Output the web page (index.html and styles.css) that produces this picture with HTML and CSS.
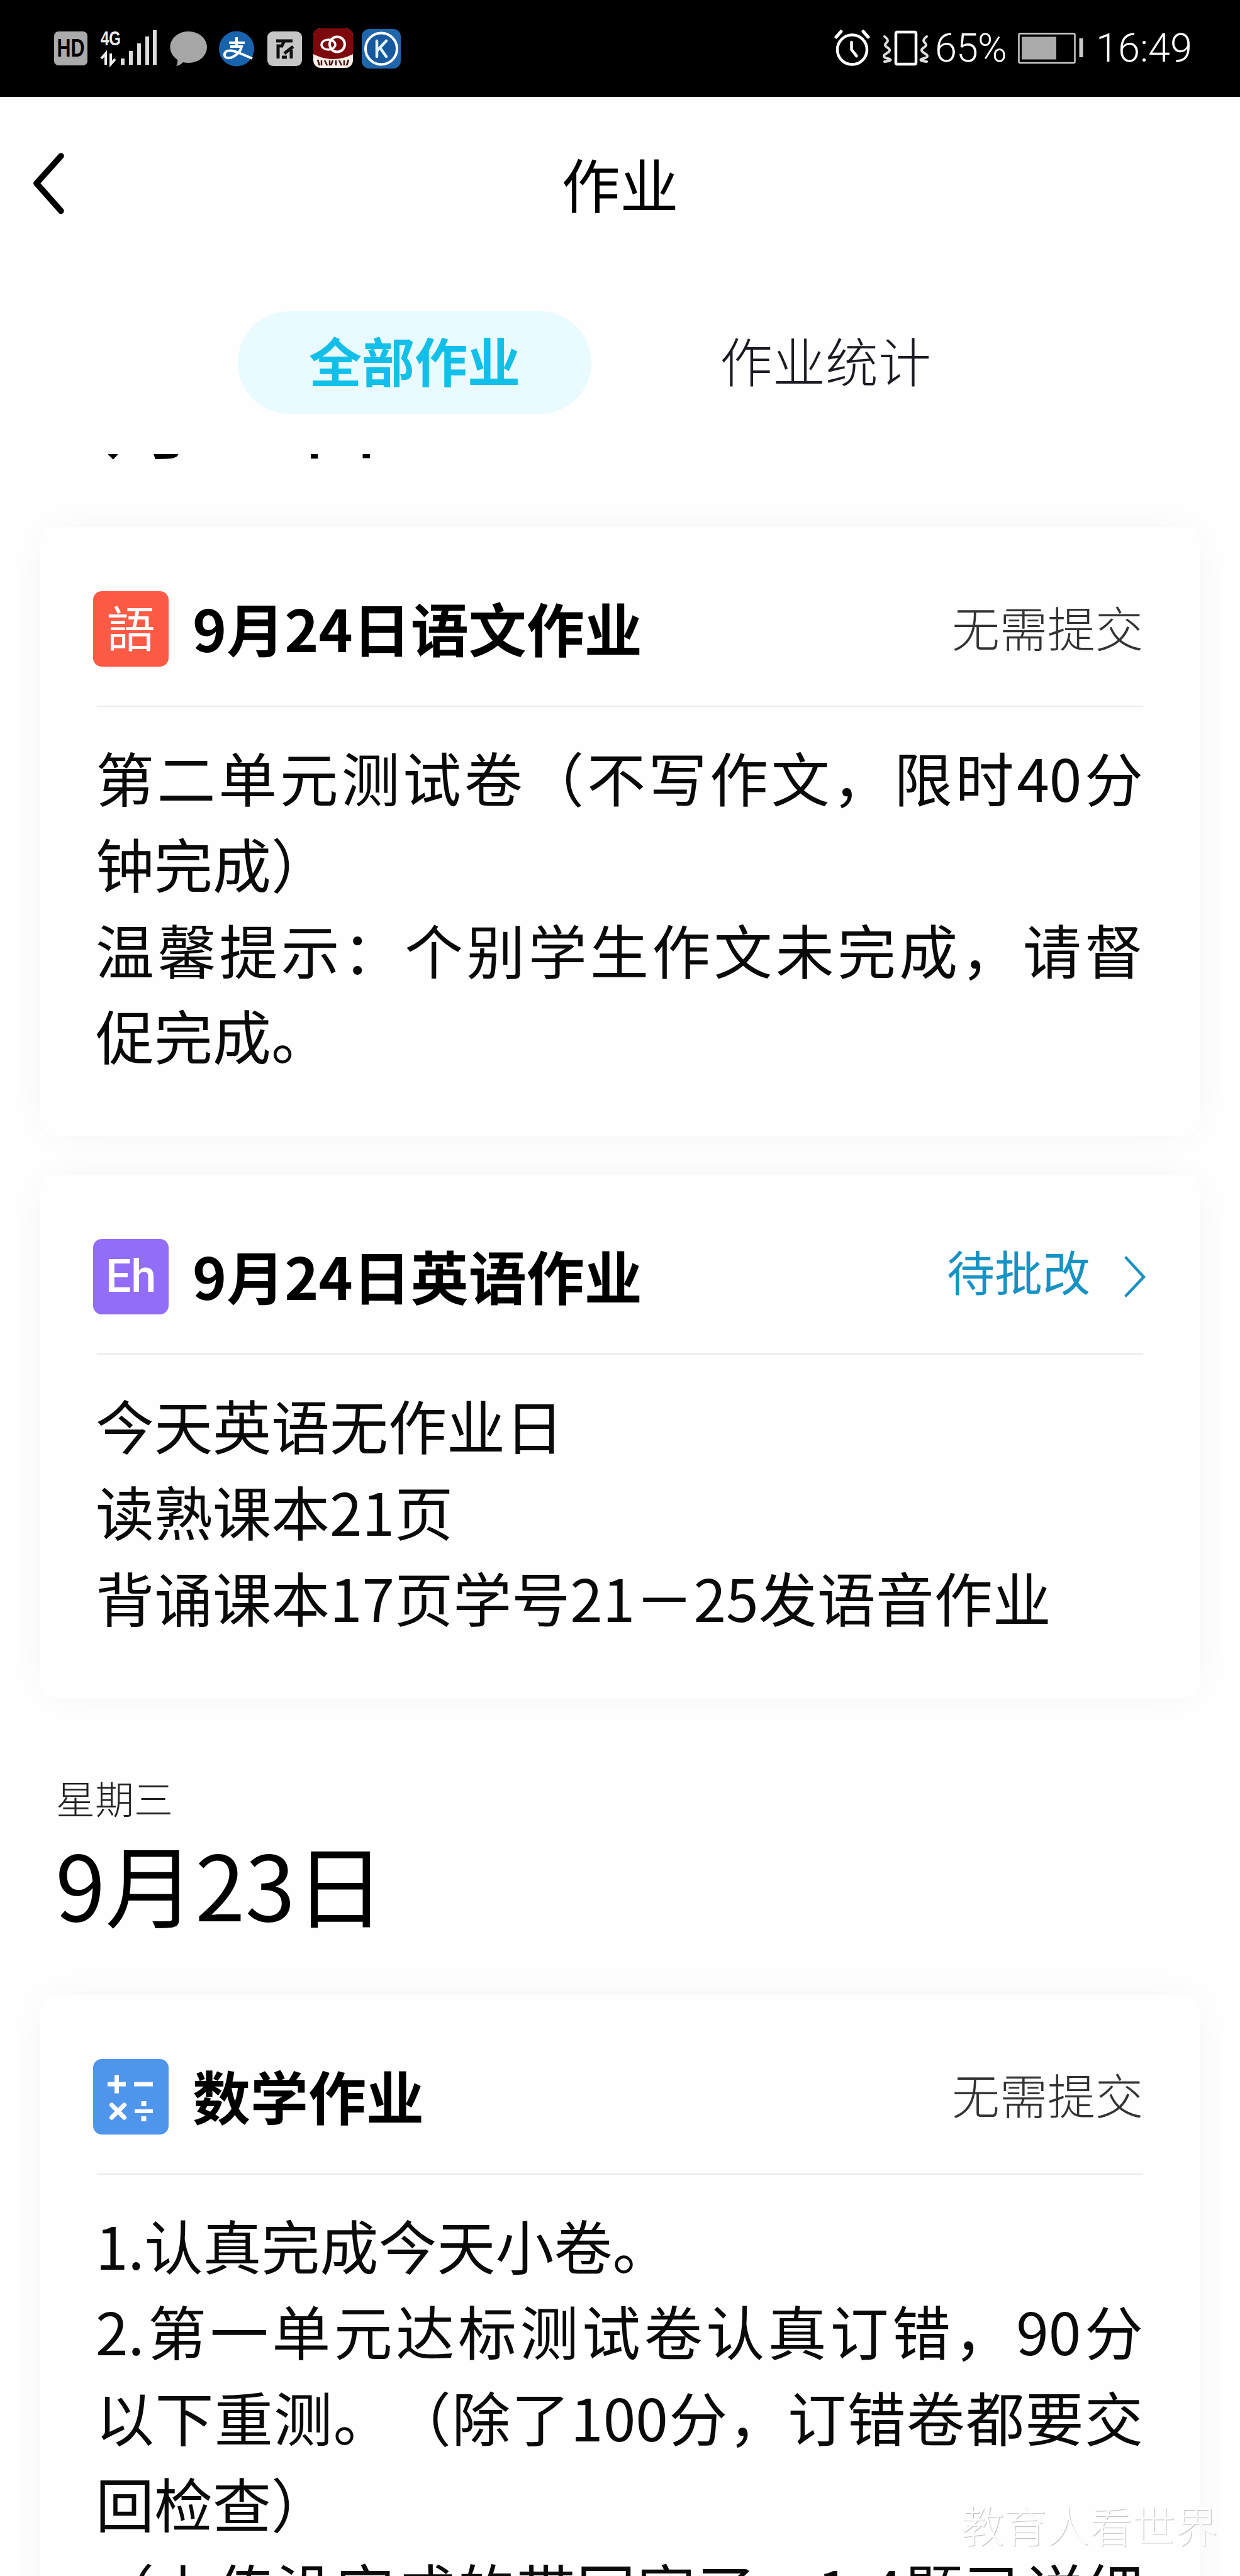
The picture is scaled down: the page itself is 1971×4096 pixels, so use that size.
FILE: index.html
```html
<!DOCTYPE html>
<html lang="zh-CN">
<head>
<meta charset="UTF-8" />
<meta name="viewport" content="width=device-width, initial-scale=1" />
<title>作业</title>
<link rel="stylesheet" href="styles.css">
</head>
<body>

  <div class="status-bar">
    <svg class="status-left" width="552" height="70" viewBox="86 43 552 70">
      <!-- HD -->
      <rect x="86" y="51" width="53" height="54" rx="7" fill="#aaa" />
      <text class="hd" x="112.5" y="91" text-anchor="middle" textLength="44" lengthAdjust="spacingAndGlyphs">HD</text>
      <!-- 4G -->
      <text class="net" x="160" y="73" textLength="32" lengthAdjust="spacingAndGlyphs">4G</text>
      <path d="M161 94l7-8v18M176 86v17l7-8" fill="none" stroke="#eee" stroke-width="4" />
      <path d="M192 94h6v10h-6zM205 82h6v22h-6zM218 70h6v34h-6zM231 59h6v45h-6zM243 49h6v55h-6z" fill="#ddd" />
      <!-- message -->
      <path d="M300 51a29 25 0 0 1 0 50q-5 0-9-1-5 5-11 6 3-5 2-10a29 25 0 0 1 18-45z" fill="#a6a6a6" />
      <!-- pay -->
      <circle cx="376" cy="78.500" r="28" fill="#1763ad" />
      <path d="M364 69h25M376 60v13M366 75h18q-2 10-13 16c-9 5-15 1-14-4 2-9 15-5 23-2l21 9" fill="none" stroke="#fff" stroke-width="4" />
      <!-- news -->
      <rect x="425" y="51" width="55" height="55" rx="9" fill="#c6c6c6" />
      <path d="M439 66h26M452 66l-4 8M442 94V74h8M463 80v14M448 92h8M466 75l-14 11" fill="none" stroke="#111" stroke-width="5" />
      <!-- red app -->
      <rect x="498" y="46" width="63" height="63" rx="12" fill="#fbeee6" />
      <path d="M498 58q0-12 12-12h39q12 0 12 12v29q-31 16-63 0z" fill="#7d090d" />
      <ellipse cx="522" cy="72" rx="11" ry="8" fill="none" stroke="#fff" stroke-width="3.500" />
      <circle cx="536" cy="71.500" r="12" fill="none" stroke="#fff" stroke-width="4" />
      <path d="M505 96l3 9M511 97v8M516 97l4 8M524 97v8M529 97l-3 8M534 97v8M539 97l4 8M547 97v8M554 96l-3 9" fill="none" stroke="#3c1010" stroke-width="2.500" />
      <!-- K app -->
      <rect x="575" y="47" width="62" height="63" rx="12" fill="#1f66ad" />
      <circle cx="606" cy="78.500" r="25" fill="#17599f" stroke="#fff" stroke-width="4" />
      <path d="M599 66v25M614 66l-14 15M604 77l10 14" fill="none" stroke="#dff2ff" stroke-width="4.500" stroke-linecap="round" />
    </svg>

    <div class="status-right">
      <svg width="150" height="60" viewBox="1326 47 150 60" fill="none" stroke="#fff" stroke-linecap="round">
        <circle cx="1354.500" cy="79" r="23.500" stroke-width="4.500" />
        <path d="M1353.500 67v12l8 10" stroke-width="4.500" />
        <path d="M1329 59l8-9M1380 59l-8-9" stroke-width="5" />
        <rect x="1424" y="51" width="32" height="51" rx="2" stroke-width="4.500" />
        <path d="M1406 58q8 6 3 10t2 8-2 9 2 8-5 5M1473 58q-8 6-3 10t-2 8 2 9-2 8 5 5" stroke="#ddd" stroke-width="4" />
      </svg>
      <span class="percent">65%</span>
      <svg class="battery" width="104" height="50" viewBox="1618 53 104 50">
        <rect x="1619.500" y="54.500" width="89" height="46.500" rx="2" fill="none" stroke="#ccc" stroke-width="2.500" />
        <rect x="1624" y="59.500" width="55" height="36" fill="#aaa" />
        <rect x="1715.500" y="62" width="6" height="30" fill="#ccc" />
      </svg>
      <span class="clock">16:49</span>
    </div>
  </div>

  <header>
    <svg class="back" width="56" height="104" viewBox="0 0 56 104">
      <path d="M47 8L8 51.500l39 44" fill="none" stroke="#000" stroke-width="9.500" stroke-linecap="round" stroke-linejoin="round" />
    </svg>
    <h1>作业</h1>
  </header>

  <nav class="tabs">
    <a class="tab active">全部作业</a>
    <a class="tab">作业统计</a>
  </nav>

  <main class="list">
    <h2 class="date">9月24日</h2>

    <section class="card">
      <div class="card-head">
        <span class="subject chinese">語</span>
        <h3>9月24日语文作业</h3>
        <span class="state">无需提交</span>
      </div>
      <div class="content">
        <p class="full">第二单元测试卷（不写作文，限时40分</p>
        <p>钟完成）</p>
        <p class="full">温馨提示：个别学生作文未完成，请督</p>
        <p>促完成。</p>
      </div>
    </section>

    <section class="card">
      <div class="card-head">
        <span class="subject english">Eh</span>
        <h3>9月24日英语作业</h3>
        <span class="state pending">待批改</span>
        <svg class="arrow" width="36" height="68" viewBox="0 0 36 68">
          <path d="M4 4l28 30.500L4 64" fill="none" stroke="#1792c4" stroke-width="4.500" stroke-linecap="round" />
        </svg>
      </div>
      <div class="content">
        <p>今天英语无作业日</p>
        <p>读熟课本21页</p>
        <p>背诵课本17页学号21－25发语音作业</p>
      </div>
    </section>

    <div class="weekday">星期三</div>
    <h2 class="date">9月23日</h2>

    <section class="card">
      <div class="card-head">
        <span class="subject math">
          <svg width="120" height="120" viewBox="0 0 120 120" fill="none" stroke="#fff" stroke-width="7">
            <path d="M23 40h29M37.500 25.500v29M65 40h30" />
            <path d="M29.500 73l20 20M49.500 73l-20 20" stroke-linecap="round" />
            <path d="M66 83h29" stroke-width="6" />
            <path d="M76.500 71h8M76.500 95h8" stroke-width="8" />
          </svg>
        </span>
        <h3>数学作业</h3>
        <span class="state">无需提交</span>
      </div>
      <div class="content">
        <p>1.认真完成今天小卷。</p>
        <p class="full">2.第一单元达标测试卷认真订错，90分</p>
        <p class="full">以下重测。（除了100分，订错卷都要交</p>
        <p>回检查）</p>
        <p class="full">（上传没完成的带回家了，1-4题已详细</p>
      </div>
    </section>
  </main>

  <div class="watermark">教育人看世界</div>

</body>
</html>
```
FILE: styles.css
```css
* {
  box-sizing: border-box;
  margin: 0;
  padding: 0;
}

html, body {
  height: 4096px;
  overflow: hidden;
}

body {
  position: relative;
  display: flex;
  flex-direction: column;
  background: #fefefe;
  color: #000;
  font-family: "Noto Sans CJK SC", sans-serif;
  text-spacing-trim: space-all;
}

svg {
  display: block;
  flex: none;
}

.status-bar {
  flex: none;
  height: 154px;
  padding: 0 76px 0 86px;
  background: #000;
  color: #fff;
  display: flex;
  align-items: center;
  justify-content: space-between;
}

.hd {
  font: bold 40px "Liberation Sans", sans-serif;
  fill: #000;
}

.net {
  font: bold 32px "Liberation Sans", sans-serif;
  fill: #eee;
}

.status-right {
  display: flex;
  align-items: center;
  font-family: Roboto, sans-serif;
  font-weight: 300;
  font-size: 63px;
  line-height: 70px;
}

.percent {
  width: 116px;
  margin-left: 10px;
  white-space: nowrap;
  letter-spacing: -1px;
}

.battery {
  margin: 0 20px 0 16px;
}

header {
  flex: none;
  height: 282px;
  padding-left: 50px;
  display: flex;
  align-items: center;
}

.back {
  margin-bottom: 6px;
}

h1 {
  flex: 1;
  margin-right: 106px;
  font-size: 93px;
  line-height: 100px;
  font-weight: 400;
  text-align: center;
  margin-bottom: 8px;
}

.tabs {
  flex: none;
  height: 286px;
  padding: 59px 0 0 378px;
  display: flex;
  align-items: flex-start;
  gap: 125px;
}

.tab {
  width: 562px;
  height: 163px;
  border-radius: 82px;
  text-align: center;
  font-size: 84px;
  line-height: 153px;
  font-weight: 300;
  color: #1a1a22;
}

.tab.active {
  background: #e9fbff;
  color: #12bfe9;
  font-weight: 700;
}

.tab:last-child {
  width: auto;
  padding-left: 79px;
}

.list {
  flex: 1;
  overflow: hidden;
  padding: 0 64px;
}

.date {
  height: 140px;
  margin: 0 0 108px 24px;
  font-size: 143px;
  line-height: 138px;
  font-weight: 400;
}

.list > .date:first-child {
  margin-top: -134px;
  margin-bottom: 110px;
}

.weekday {
  height: 80px;
  margin: 118px 0 26px 25px;
  font-size: 62px;
  line-height: 80px;
  font-weight: 300;
  color: #222;
}

.card {
  background: #fefefe;
  border-radius: 24px;
  padding: 102px 90px 92px;
  margin-bottom: 62px;
  box-shadow: 0 0 64px -14px rgba(0, 0, 0, 0.06);
}

.card-head {
  display: flex;
  align-items: center;
  height: 184px;
  padding-bottom: 62px;
  border-bottom: 2px solid #e9eaee;
}

.subject {
  flex: none;
  width: 120px;
  height: 120px;
  margin-left: -6px;
  border-radius: 14px;
  color: #fff;
  text-align: center;
  line-height: 120px;
}

.chinese {
  background: #fc5a45;
  font-family: "Noto Sans CJK TC", sans-serif;
  font-size: 77px;
  font-weight: 400;
  line-height: 112px;
}

.english {
  background: #926df8;
  font-family: Roboto, sans-serif;
  font-size: 72px;
  font-weight: 500;
}

.math {
  background: #4f95ec;
}

h3 {
  flex: 1;
  margin-left: 38px;
  font-size: 92px;
  line-height: 120px;
  font-weight: 700;
  position: relative;
  top: -3px;
}

.state {
  font-size: 76px;
  line-height: 100px;
  font-weight: 300;
  color: #333;
  margin-bottom: 9px;
}

.state.pending {
  color: #1792c4;
  font-weight: 400;
  margin: 0 53px 20px 0;
}

.arrow {
  margin-right: -5px;
}

.content {
  padding-top: 43px;
  margin-left: -2px;
  font-size: 93px;
  line-height: 136.8px;
  color: #0a0a0a;
}

.content p {
  white-space: nowrap;
}

.content .full {
  text-align: justify;
  text-align-last: justify;
  white-space: normal;
}

.watermark {
  position: absolute;
  right: 35px;
  bottom: 32px;
  font-size: 68px;
  line-height: 100px;
  font-weight: 300;
  color: #fff;
  text-shadow: 1px 1px 1px #bbb;
}
```
